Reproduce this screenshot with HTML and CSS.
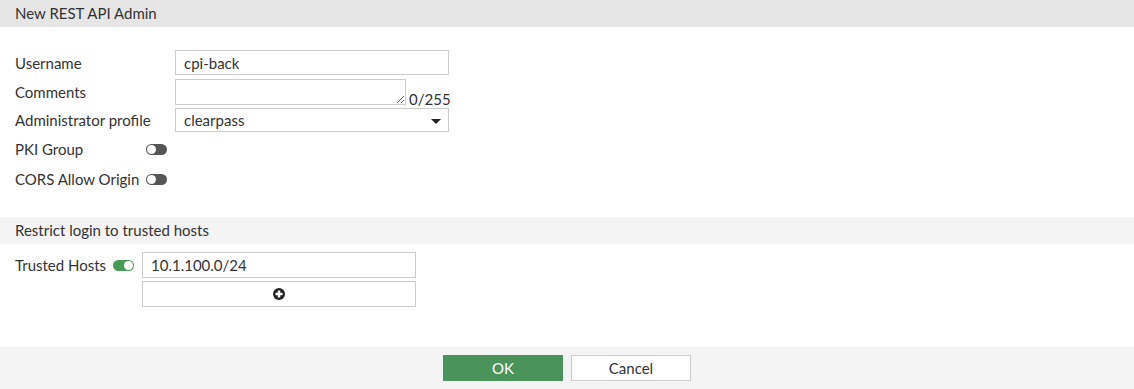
FILE: index.html
```html
<!DOCTYPE html>
<html>
<head>
<meta charset="utf-8">
<link rel="stylesheet" href="styles.css">
</head>
<body>
<div class="page">
  <div class="title-bar">New REST API Admin</div>
  <div class="form">
    <div class="row row-user">
      <div class="label">Username</div>
      <div class="field">cpi-back</div>
    </div>
    <div class="row row-comments">
      <div class="label">Comments</div>
      <textarea class="comments"></textarea>
      <span class="counter">0/255</span>
    </div>
    <div class="row row-profile">
      <div class="label">Administrator profile</div>
      <div class="field select">clearpass<span class="caret"></span></div>
    </div>
    <div class="row row-toggle">
      <div class="label label-toggle">PKI Group</div>
      <span class="toggle"></span>
    </div>
    <div class="row row-toggle">
      <div class="label label-toggle">CORS Allow Origin</div>
      <span class="toggle"></span>
    </div>
  </div>
  <div class="section-bar">Restrict login to trusted hosts</div>
  <div class="hosts">
    <div class="hosts-label">
      <span>Trusted Hosts</span>
      <span class="toggle on"></span>
    </div>
    <div class="hosts-list">
      <div class="field host">10.1.100.0/24</div>
      <div class="field add">
        <svg width="12" height="12" viewBox="0 0 12 12"><circle cx="6" cy="6" r="6" fill="#222"/><rect x="4.75" y="2.5" width="2.5" height="7" fill="#fff"/><rect x="2.5" y="4.75" width="7" height="2.5" fill="#fff"/></svg>
      </div>
    </div>
  </div>
  <div class="footer">
    <button class="btn ok">OK</button>
    <button class="btn cancel">Cancel</button>
  </div>
</div>
</body>
</html>
```
FILE: styles.css
```css
html, body {
  margin: 0;
  padding: 0;
  background: #fff;
}
body {
  font-family: Lato, "Open Sans", sans-serif;
  font-size: 15px;
  color: #333;
}
.page {
  width: 1134px;
  height: 389px;
  display: flex;
  flex-direction: column;
}
.title-bar {
  height: 27px;
  line-height: 27px;
  background: #e6e6e6;
  padding-left: 15px;
}
.form {
  padding: 23px 0 0 15px;
  display: flex;
  flex-direction: column;
}
.row {
  display: flex;
  align-items: center;
}
.label {
  width: 160px;
  flex: none;
}
.row-user { height: 25px; margin-bottom: 4px; }
.row-comments { height: 26px; margin-bottom: 3px; }
.row-profile { height: 24px; margin-bottom: 2px; }
.row-toggle { height: 30px; }
.label-toggle { width: 131px; }
.field {
  box-sizing: border-box;
  width: 274px;
  height: 100%;
  border: 1px solid #ccc;
  padding-left: 8px;
  display: flex;
  align-items: center;
  background: #fff;
}
.comments {
  box-sizing: border-box;
  width: 231px;
  height: 26px;
  border: 1px solid #ccc;
  margin: 0;
  padding: 0;
  font: inherit;
}
.counter {
  align-self: flex-end;
  margin-left: 3px;
  line-height: 15px;
  margin-bottom: -2px;
}
.select {
  position: relative;
}
.caret {
  position: absolute;
  right: 7px;
  top: 10px;
  width: 0;
  height: 0;
  border-left: 5px solid transparent;
  border-right: 5px solid transparent;
  border-top: 5px solid #222;
}
.toggle {
  position: relative;
  display: inline-block;
  width: 21px;
  height: 11px;
  border-radius: 6px;
  background: #555;
  flex: none;
}
.toggle::after {
  content: "";
  position: absolute;
  left: 1px;
  top: 1px;
  width: 9px;
  height: 9px;
  border-radius: 50%;
  background: #fff;
}
.toggle.on {
  background: #4b9a58;
}
.toggle.on::after {
  left: 11px;
}
.section-bar {
  margin-top: 23px;
  height: 27px;
  line-height: 27px;
  background: #f4f4f4;
  padding-left: 15px;
}
.hosts {
  display: flex;
  padding: 8px 0 0 15px;
}
.hosts-label {
  display: flex;
  align-items: center;
  gap: 7px;
  height: 26px;
  width: 127px;
}
.hosts-list {
  display: flex;
  flex-direction: column;
  gap: 3px;
}
.host {
  height: 26px;
}
.add {
  height: 26px;
  justify-content: center;
  padding: 0;
}
.footer {
  margin-top: auto;
  height: 42px;
  background: #f4f4f4;
  display: flex;
  justify-content: center;
  align-items: flex-start;
  padding-top: 8px;
  box-sizing: border-box;
  gap: 8px;
}
.btn {
  width: 120px;
  height: 26px;
  font: inherit;
  margin: 0;
  cursor: pointer;
}
.ok {
  background: #4a935a;
  color: #fff;
  border: none;
}
.cancel {
  background: #fff;
  color: #333;
  border: 1px solid #ccc;
}
```
